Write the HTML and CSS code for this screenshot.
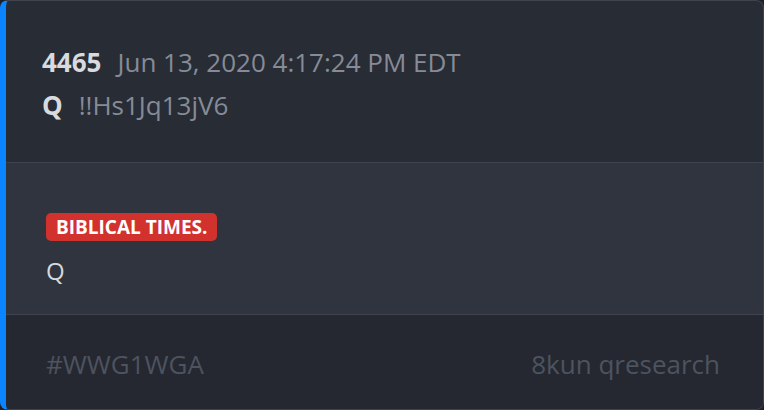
FILE: index.html
```html
<!DOCTYPE html>
<html>
<head>
<meta charset="utf-8">
<link rel="stylesheet" href="styles.css">
</head>
<body>
<div class="card">
  <div class="head">
    <div class="row"><span class="num">4465</span><span class="meta">Jun 13, 2020 4:17:24 PM EDT</span></div>
    <div class="row"><span class="num">Q</span><span class="meta">!!Hs1Jq13jV6</span></div>
  </div>
  <div class="body">
    <span class="badge">BIBLICAL TIMES.</span>
    <div class="msg">Q</div>
  </div>
  <div class="foot">
    <span>#WWG1WGA</span>
    <span>8kun qresearch</span>
  </div>
</div>
</body>
</html>
```
FILE: styles.css
```css
html, body { margin: 0; padding: 0; background: #1d2027; }
body { width: 764px; height: 410px; font-family: "Open Sans", "Noto Sans", sans-serif; }
.card {
  box-sizing: border-box;
  width: 764px; height: 410px;
  border: 1px solid #3e434e;
  border-left: 6px solid #0a84ff;
  border-radius: 8px;
  overflow: hidden;
  display: flex; flex-direction: column;
  background: #282c35;
}
.head {
  height: 162px; box-sizing: border-box;
  padding: 42px 0 0 36px;
  border-bottom: 1px solid #3e434e;
  display: flex; flex-direction: column; gap: 5px;
}
.row { display: flex; align-items: baseline; gap: 16px; font-size: 26px; line-height: 38px; }
.num { font-weight: 700; color: #d7dade; }
.meta { color: #868b97; }
.body {
  height: 152px; box-sizing: border-box;
  background: #2f343e;
  border-bottom: 1px solid #3e434e;
  padding: 50px 0 0 40px;
  display: flex; flex-direction: column; align-items: flex-start;
}
.badge {
  background: #d2322e; color: #fff; font-weight: 700;
  font-size: 19px; line-height: 28px; padding: 0 10px; border-radius: 5px;
}
.msg { color: #d5d8dd; font-size: 24px; line-height: 30px; margin-top: 15px; }
.foot {
  flex: 1; background: #252830;
  display: flex; justify-content: space-between; align-items: center;
  padding: 4px 43px 0 40px;
  font-size: 26px; color: #4d535f;
}
```
